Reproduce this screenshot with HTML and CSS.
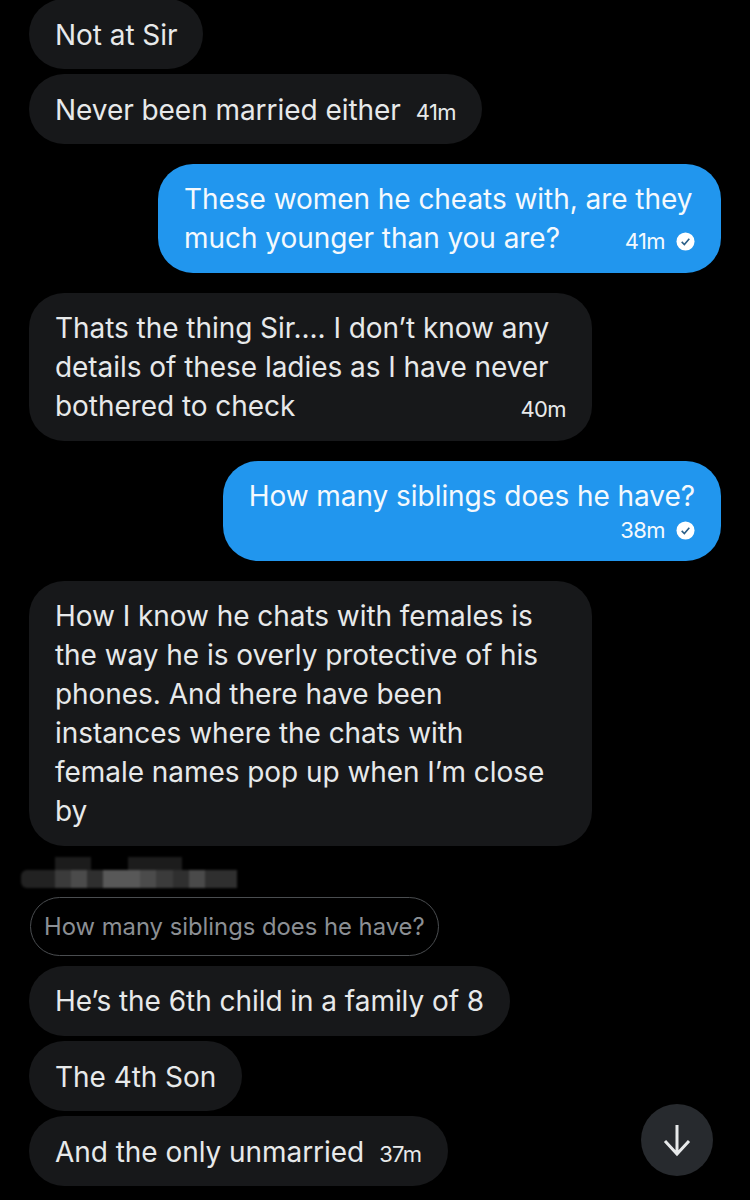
FILE: index.html
```html
<!DOCTYPE html>
<html lang="en">
<head>
<meta charset="utf-8">
<title>Messages</title>
<link rel="stylesheet" href="styles.css">
</head>
<body>
<main class="thread">
  <div class="bubble in tight first">Not at Sir</div>
  <div class="bubble in tight">Never been married either<span class="meta inline">41m</span></div>

  <div class="bubble out gap">These women he cheats with, are they much younger than you are?<span class="meta end"><span>41m</span><svg class="check" viewBox="0 0 20 20"><circle cx="10" cy="10" r="9.5" fill="#fff"/><path d="M6 10.4l2.8 2.8 5.2-6" fill="none" stroke="#2a5f88" stroke-width="1.7"/></svg></span></div>

  <div class="bubble in gap">Thats the thing Sir.... I don’t know any details of these ladies as I have never bothered to check<span class="meta end">40m</span></div>

  <div class="bubble out gap">How many siblings does he have?<span class="meta own"><span>38m</span><svg class="check" viewBox="0 0 20 20"><circle cx="10" cy="10" r="9.5" fill="#fff"/><path d="M6 10.4l2.8 2.8 5.2-6" fill="none" stroke="#2a5f88" stroke-width="1.7"/></svg></span></div>

  <div class="bubble in gap">How I know he chats with females is the way he is overly protective of his phones. And there have been instances where the chats with<br>female names pop up when I’m close<br>by</div>

  <div class="redacted" aria-hidden="true">
    <div class="redacted-top"><i></i><i></i><b></b><i></i><i></i><i></i></div>
    <div class="redacted-bar"><i></i><i></i><i></i><i></i><i></i><i></i><i></i><i></i><i></i><i></i><i></i></div>
  </div>

  <div class="quote">How many siblings does he have?</div>

  <div class="bubble in quoted">He’s the 6th child in a family of 8</div>
  <div class="bubble in tight">The 4th Son</div>
  <div class="bubble in tight">And the only unmarried<span class="meta inline">37m</span></div>
</main>
<button class="scroll-down" aria-label="Scroll to bottom">
  <svg viewBox="0 0 30 34" width="30" height="34"><path d="M15 2v29M3 18l12 13 12-13" fill="none" stroke="#e7e9ea" stroke-width="3"/></svg>
</button>
</body>
</html>
```

FILE: styles.css
```css
* { box-sizing: border-box; }
html, body { margin: 0; height: 1200px; overflow: hidden; background: #000; }
body { position: relative; font-family: Inter, "Noto Sans", sans-serif; color: #e7e9ea; }
.thread { display: flex; flex-direction: column; align-items: flex-start; padding: 0 29px; margin-top: -1px; }
.bubble {
  display: flow-root;
  width: fit-content;
  max-width: 563px;
  padding: 16px 26px 15px;
  border-radius: 35px;
  font-size: 28px;
  letter-spacing: -0.05px;
  line-height: 39px;
  background: #17181a;
}
.tight { margin-top: 5px; padding-top: 16.5px; padding-bottom: 14.5px; }
.first { margin-top: 0; }
.gap { margin-top: 20px; }
.quoted { margin-top: 10px; }
.out { align-self: flex-end; background: #2196ee; color: #f4f9fd; }
.meta { font-size: 22px; letter-spacing: -0.6px; line-height: 30px; }
.meta.inline { margin-left: 15px; }
.meta.end { float: right; display: flex; align-items: center; gap: 11px; margin-top: 7px; }
.meta.own { display: flex; justify-content: flex-end; align-items: center; gap: 11px; margin: -1px 0 1px; }
.check { width: 19px; height: 19px; }
.redacted { margin: 11px 0 9px -8px; height: 31px; width: 216px; filter: blur(1.2px); display: flex; flex-direction: column; justify-content: flex-end; }
.redacted-top { display: flex; height: 13px; padding-left: 34px; }
.redacted-top i { width: 18px; background: #1c1c1c; }
.redacted-top b { width: 37px; }
.redacted-bar { display: flex; height: 18px; }
.redacted-bar i { flex: 1; background: #2f2f2f; }
.redacted-bar i:first-child { flex: 0 0 34px; background: #222; border-radius: 6px 0 0 6px; }
.redacted-bar i:nth-child(2), .redacted-bar i:nth-child(7) { background: #3b3b3b; }
.redacted-bar i:nth-child(3), .redacted-bar i:nth-child(6) { background: #4b4b4b; }
.redacted-bar i:nth-child(5) { flex: 0 0 37px; background: #585858; }
.redacted-bar i:nth-child(9) { background: #4a4a4a; }
.quote {
  margin-left: 1px;
  padding: 0 13px;
  height: 59px;
  display: flex;
  align-items: center;
  border: 1.5px solid #4a4d50;
  border-radius: 30px;
  font-size: 23.8px;
  color: #8b8f94;
}
.scroll-down {
  position: absolute;
  left: 641px;
  top: 1104px;
  width: 72px;
  height: 72px;
  padding: 0;
  border: 0;
  border-radius: 50%;
  background: #272a2e;
  display: flex;
  align-items: center;
  justify-content: center;
}
```
